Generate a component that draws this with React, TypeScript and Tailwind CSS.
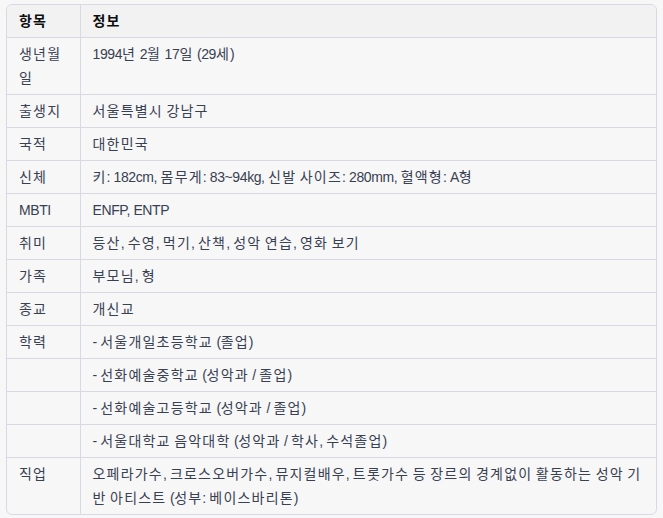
import React from "react";

// Rows of the profile table
const rows: { label: string; value: string }[] = [
  { label: "생년월일", value: "1994년 2월 17일 (29세)" },
  { label: "출생지", value: "서울특별시 강남구" },
  { label: "국적", value: "대한민국" },
  { label: "신체", value: "키: 182cm, 몸무게: 83~94kg, 신발 사이즈: 280mm, 혈액형: A형" },
  { label: "MBTI", value: "ENFP, ENTP" },
  { label: "취미", value: "등산, 수영, 먹기, 산책, 성악 연습, 영화 보기" },
  { label: "가족", value: "부모님, 형" },
  { label: "종교", value: "개신교" },
  { label: "학력", value: "- 서울개일초등학교 (졸업)" },
  { label: "", value: "- 선화예술중학교 (성악과 / 졸업)" },
  { label: "", value: "- 선화예술고등학교 (성악과 / 졸업)" },
  { label: "", value: "- 서울대학교 음악대학 (성악과 / 학사, 수석졸업)" },
  {
    label: "직업",
    value:
      "오페라가수, 크로스오버가수, 뮤지컬배우, 트롯가수 등 장르의 경계없이 활동하는 성악 기반 아티스트 (성부: 베이스바리톤)",
  },
];

// Hangul runs get a bit more tracking than latin text
const Txt = ({ text }: { text: string }) => (
  <>
    {text.split(/([\uac00-\ud7a3]+)/).map((part, i) =>
      /[\uac00-\ud7a3]/.test(part) ? (
        <span key={i} className="tracking-[1.2px]">
          {part}
        </span>
      ) : (
        <React.Fragment key={i}>{part}</React.Fragment>
      )
    )}
  </>
);

export default function App() {
  return (
    <div
      className="min-h-[518px] w-[663px] bg-[#f7f7f8] pl-[6px] pr-[6px] pt-[4px]"
      style={{ fontFamily: '"Liberation Sans", "Noto Sans CJK KR", sans-serif' }}
    >
      <div className="overflow-hidden rounded-md border border-[#d9d9e3]">
        <table className="w-full border-collapse text-left text-[14px] leading-6 tracking-[-0.4px] text-[#374151]">
          <thead>
            <tr className="bg-[#f2f2f3]">
              <th className="w-[73px] border-r border-b border-[#d9d9e3] px-3 py-1 font-semibold text-[#0d0d0d]">
                <Txt text="항목" />
              </th>
              <th className="border-b border-[#d9d9e3] px-3 py-1 font-semibold text-[#0d0d0d]">
                <Txt text="정보" />
              </th>
            </tr>
          </thead>
          <tbody>
            {rows.map((row, i) => (
              <tr key={i}>
                <td
                  className={`w-[73px] border-r border-[#d9d9e3] px-3 py-1 align-top ${
                    i < rows.length - 1 ? "border-b" : ""
                  }`}
                >
                  <Txt text={row.label} />
                </td>
                <td
                  className={`border-[#d9d9e3] px-3 py-1 align-top ${
                    i < rows.length - 1 ? "border-b" : ""
                  }`}
                >
                  <Txt text={row.value} />
                </td>
              </tr>
            ))}
          </tbody>
        </table>
      </div>
    </div>
  );
}
